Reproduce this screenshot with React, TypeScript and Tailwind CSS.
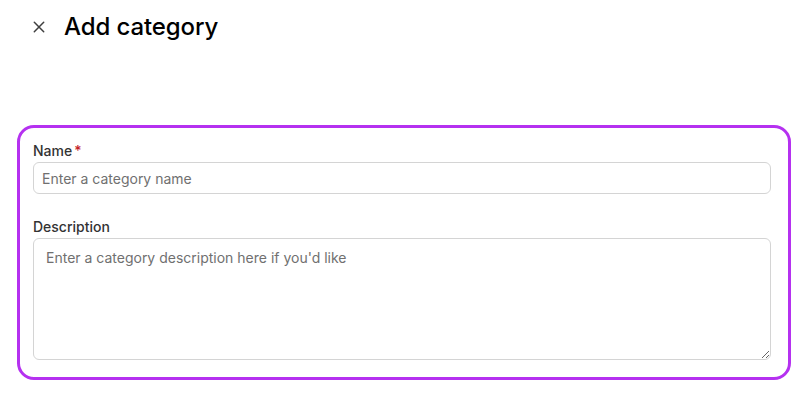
import React from "react";

export default function App() {
  return (
    <div className="w-[809px] h-[413px] bg-white overflow-hidden" style={{ fontFamily: "Inter, 'Noto Sans', sans-serif" }}>
      <div className="flex items-center h-[54px] pl-[31px]">
        <button className="w-[16px] h-[16px] flex items-center justify-center text-[#3f3f3f]">
          <svg width="14" height="14" viewBox="0 0 14 14" fill="none" stroke="currentColor" strokeWidth="1.5" strokeLinecap="round">
            <path d="M2.3 2.3 L11.7 11.7 M11.7 2.3 L2.3 11.7" />
          </svg>
        </button>
        <h1 className="ml-[17px] text-[24px] leading-[32px] font-[450] text-black tracking-[-0.1px]">Add category</h1>
      </div>
      <div className="mt-[71px] ml-[17px] w-[774px] h-[255px] border-[3px] border-[#b531f0] rounded-[17px] pt-[13px] pl-[13px] pr-[17px]">
        <label className="flex items-center text-[14px] leading-[20px] font-[480] text-[#333]">
          Name<span className="ml-[2px] text-[#c42127]">*</span>
        </label>
        <input
          className="mt-[1px] block w-full h-[32px] rounded-[6px] border border-[#d4d4d4] px-[8px] text-[14px] text-[#333] placeholder:text-[#707070] outline-none"
          placeholder="Enter a category name"
        />
        <label className="block mt-[23px] text-[14px] leading-[20px] font-[480] text-[#333]">Description</label>
        <textarea
          className="mt-[1px] block w-full h-[122px] rounded-[6px] border border-[#d4d4d4] px-[12px] py-[9px] text-[14px] leading-[20px] text-[#333] placeholder:text-[#707070] outline-none"
          placeholder="Enter a category description here if you'd like"
        />
      </div>
    </div>
  );
}
